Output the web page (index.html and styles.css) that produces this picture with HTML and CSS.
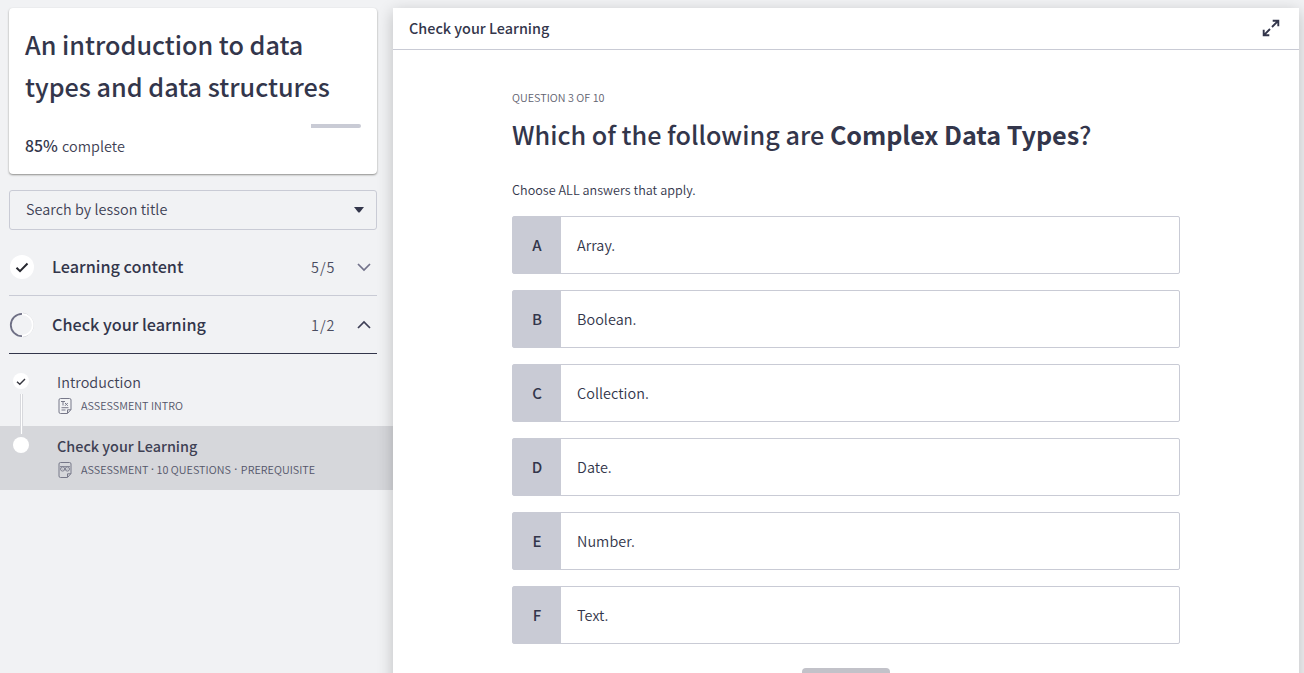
FILE: index.html
```html
<!DOCTYPE html>
<html lang="en">
<head>
<meta charset="utf-8">
<title>Check your Learning</title>
<link rel="stylesheet" href="styles.css">
</head>
<body>
<div class="app">
  <aside class="sidebar">
    <section class="course-card">
      <h1 class="course-title">An introduction to data<br>types and data structures</h1>
      <div class="progress"><div class="progress-rest"></div></div>
      <p class="progress-label"><span class="percent">85%</span><span class="complete">complete</span></p>
    </section>
    <div class="search"><span class="search-text">Search by lesson title</span>
      <svg class="caret" width="10" height="6" viewBox="0 0 10 6"><path d="M0 0H10L5.8 5.2Q5 6 4.2 5.2Z" fill="#33364b"/></svg>
    </div>
    <div class="group">
      <svg class="group-state" width="26" height="26" viewBox="0 0 26 26"><circle cx="13" cy="13" r="12" fill="#fff"/><path d="M7.5 13.8L11 17.2L18.5 9.5" fill="none" stroke="#26272f" stroke-width="2"/></svg>
      <span class="group-name">Learning content</span><span class="group-count">5/5</span>
      <svg class="chevron" width="14" height="10" viewBox="0 0 14 10"><path d="M1 2L7 8L13 2" fill="none" stroke="#72728a" stroke-width="1.7"/></svg>
    </div>
    <div class="group open">
      <svg class="group-state" width="26" height="26" viewBox="0 0 26 26"><path d="M14 1.2A11.9 11.9 0 0 1 14 24.8" fill="none" stroke="#c4c5cb" stroke-width=".9"/><path d="M13 2.2A10.8 10.8 0 0 1 13 23.8" fill="none" stroke="#fff" stroke-width="1.8"/><path d="M13 1.8A11.2 11.2 0 0 0 13 24.2" fill="none" stroke="#6e6f84" stroke-width="1.8"/></svg>
      <span class="group-name">Check your learning</span><span class="group-count">1/2</span>
      <svg class="chevron" width="14" height="10" viewBox="0 0 14 10"><path d="M1 8L7 2L13 8" fill="none" stroke="#3e3f56" stroke-width="1.7"/></svg>
    </div>
    <div class="lessons">
      <div class="lesson">
        <div class="dot"><svg width="16" height="16" viewBox="0 0 16 16"><path d="M4 8.8L6.8 11.3L12 6" fill="none" stroke="#35363f" stroke-width="1.4"/></svg></div>
        <div class="rail"></div>
        <div class="lesson-body"><div class="lesson-name">Introduction</div>
          <div class="meta"><svg width="14" height="16" viewBox="0 0 14 16" fill="none" stroke="#777889"><path d="M2.5.5H11.5Q13 .5 13 2V11.5L9.5 15.5H2.5Q1 15.5 1 14V2Q1 .5 2.5 .5ZM9.5 15V11.8H13"/><path d="M3 3.5H7M5 3.5V7.5M7 5L9.8 7.8M9.8 5L7 7.8M3.5 9.7H10.5M3.5 12H7.5"/></svg><span>ASSESSMENT INTRO</span></div>
        </div>
      </div>
      <div class="lesson current">
        <div class="dot"></div>
        <div class="lesson-body"><div class="lesson-name">Check your Learning</div>
          <div class="meta"><svg width="14" height="16" viewBox="0 0 14 16" fill="none" stroke="#777889"><path d="M2.5.5H11.5Q13 .5 13 2V11.5L9.5 15.5H2.5Q1 15.5 1 14V2Q1 .5 2.5 .5ZM9.5 15V11.8H13"/><circle cx="4.6" cy="7" r="2.1" stroke-width=".9"/><circle cx="9.4" cy="7" r="2.1" stroke-width=".9"/><path d="M2 4.5H12M4 6.6L5 7.6M8.8 7.6L9.8 6.6" stroke-width=".8"/></svg><span>ASSESSMENT</span><span class="sep">·</span><span>10 QUESTIONS</span><span class="sep wide">·</span><span>PREREQUISITE</span></div>
        </div>
      </div>
    </div>
  </aside>
  <main class="panel">
    <header class="panel-head"><span class="panel-title">Check your Learning</span>
      <svg width="18" height="18" viewBox="0 0 18 18" fill="none" stroke="#33364b" stroke-width="1.9"><path d="M10 8L15.8 2.2M10.7 1.7H16.3V7.3M8 10L2.2 15.8M1.7 10.7V16.3H7.3"/></svg>
    </header>
    <div class="question">
      <p class="counter">QUESTION 3 OF 10</p>
      <h2 class="prompt">Which of the following are <b>Complex Data Types</b>?</h2>
      <p class="hint">Choose ALL answers that apply.</p>
      <div class="answers">
        <div class="answer"><span class="key">A</span><span class="value">Array.</span></div>
        <div class="answer"><span class="key">B</span><span class="value">Boolean.</span></div>
        <div class="answer"><span class="key">C</span><span class="value">Collection.</span></div>
        <div class="answer"><span class="key">D</span><span class="value">Date.</span></div>
        <div class="answer"><span class="key">E</span><span class="value">Number.</span></div>
        <div class="answer"><span class="key">F</span><span class="value">Text.</span></div>
      </div>
      <div class="submit"></div>
    </div>
  </main>
</div>
</body>
</html>
```
FILE: styles.css
```css
* { box-sizing: border-box; }
body { margin: 0; background: #f1f2f4; color: #33364b; font-family: "Noto Sans CJK SC", "Noto Sans", sans-serif; font-size: 14.4px; font-weight: 350; overflow: hidden; }
h1, h2, p { margin: 0; font-weight: 500; }
svg { display: block; flex: none; }
.app { display: flex; height: 673px; overflow: hidden; }
.sidebar { width: 393px; flex: none; padding-top: 8px; }
.course-card { margin: 0 16px 0 9px; height: 166px; padding: 15px 16px 0; background: #fff; border-radius: 4px; box-shadow: 0 1px 2px rgba(60,60,55,.55); }
.course-title { font-size: 25.2px; line-height: 42px; }
.progress { display: flex; justify-content: flex-end; margin-top: 17px; height: 4px; }
.progress-rest { width: 50px; background: #c9cbd5; border-radius: 0 2px 2px 0; }
.progress-label { display: flex; align-items: baseline; margin-top: 8px; line-height: 20px; font-weight: 350; }
.percent { width: 37px; font-size: 15.8px; font-weight: 500; }
.complete { color: #3e4154; letter-spacing: .05px; }
.search { display: flex; align-items: center; justify-content: space-between; margin: 16px 16px 8px 9px; height: 40px; padding: 0 12px 0 16px; border: 1px solid #c9cbd5; border-radius: 3px; color: #3e4154; }
.search-text { line-height: 20px; padding-bottom: 3px; letter-spacing: .05px; }
.group { display: flex; align-items: center; height: 58px; margin: 0 16px 0 9px; padding-right: 6px; border-bottom: 1px solid #c9cbd5; }
.group.open { border-color: #33364b; }
.group-name { flex: 1; margin-left: 17px; padding-bottom: 2px; font-size: 16.2px; font-weight: 500; line-height: 24px; }
.group-count { width: 25px; margin-right: 21px; color: #4a4c60; letter-spacing: 1px; }
.lessons { padding-top: 8px; }
.lesson { position: relative; height: 64px; display: flex; padding: 11px 0 0 13px; }
.dot { width: 16px; height: 16px; border-radius: 8px; background: #fff; }
.rail { position: absolute; z-index: 1; left: 20px; top: 32px; width: 3px; height: 40px; background: #fff; border: solid #d8d9dd; border-width: 0 1px; }
.lesson-body { margin-left: 28px; }
.lesson-name { line-height: 20px; margin-top: -1px; color: #3e4154; letter-spacing: .05px; }
.current { background: #d6d7db; }
.current .lesson-name { font-weight: 500; letter-spacing: 0; }
.meta { display: flex; align-items: center; height: 16px; margin: 6px 0 0 1px; font-size: 10.8px; line-height: 16px; color: #535569; letter-spacing: .03px; }
.meta svg { margin-right: 9px; }
.meta span { padding-bottom: 2px; }
.meta .sep { width: 8px; text-align: center; font-family: "Open Sans", sans-serif; font-weight: 600; }
.meta .wide { width: 10px; }
.panel { position: relative; z-index: 2; width: 906px; height: 680px; margin-top: 8px; background: #fff; box-shadow: 0 4px 15px rgba(0,0,0,.22); }
.panel-head { display: flex; align-items: center; justify-content: space-between; height: 42px; padding: 0 19px 0 16px; border-bottom: 1px solid #c9cbd5; font-weight: 500; }
.panel-title { padding-bottom: 2px; }
.panel-head svg { margin-bottom: 1px; }
.question { width: 668px; margin-left: 119px; padding-top: 39px; }
.counter { font-size: 10.8px; line-height: 16px; font-weight: 350; color: #5f6270; letter-spacing: .02px; }
.prompt { margin-top: 8px; font-size: 25.2px; line-height: 42px; white-space: nowrap; }
.prompt b { font-weight: 700; letter-spacing: -.08px; }
.hint { margin-top: 25px; font-size: 12.6px; line-height: 20px; font-weight: 350; letter-spacing: .03px; }
.answers { display: grid; gap: 16px; margin-top: 16px; }
.answer { display: flex; height: 58px; border: 1px solid #c9cbd5; border-radius: 2px; line-height: 56px; }
.key { width: 48px; background: #c9cbd5; text-align: center; font-size: 15px; font-weight: 500; }
.value { padding-left: 16px; letter-spacing: .05px; }
.submit { width: 88px; height: 40px; margin: 24px auto 0; border-radius: 4px; background: #c2c2c9; }
```
